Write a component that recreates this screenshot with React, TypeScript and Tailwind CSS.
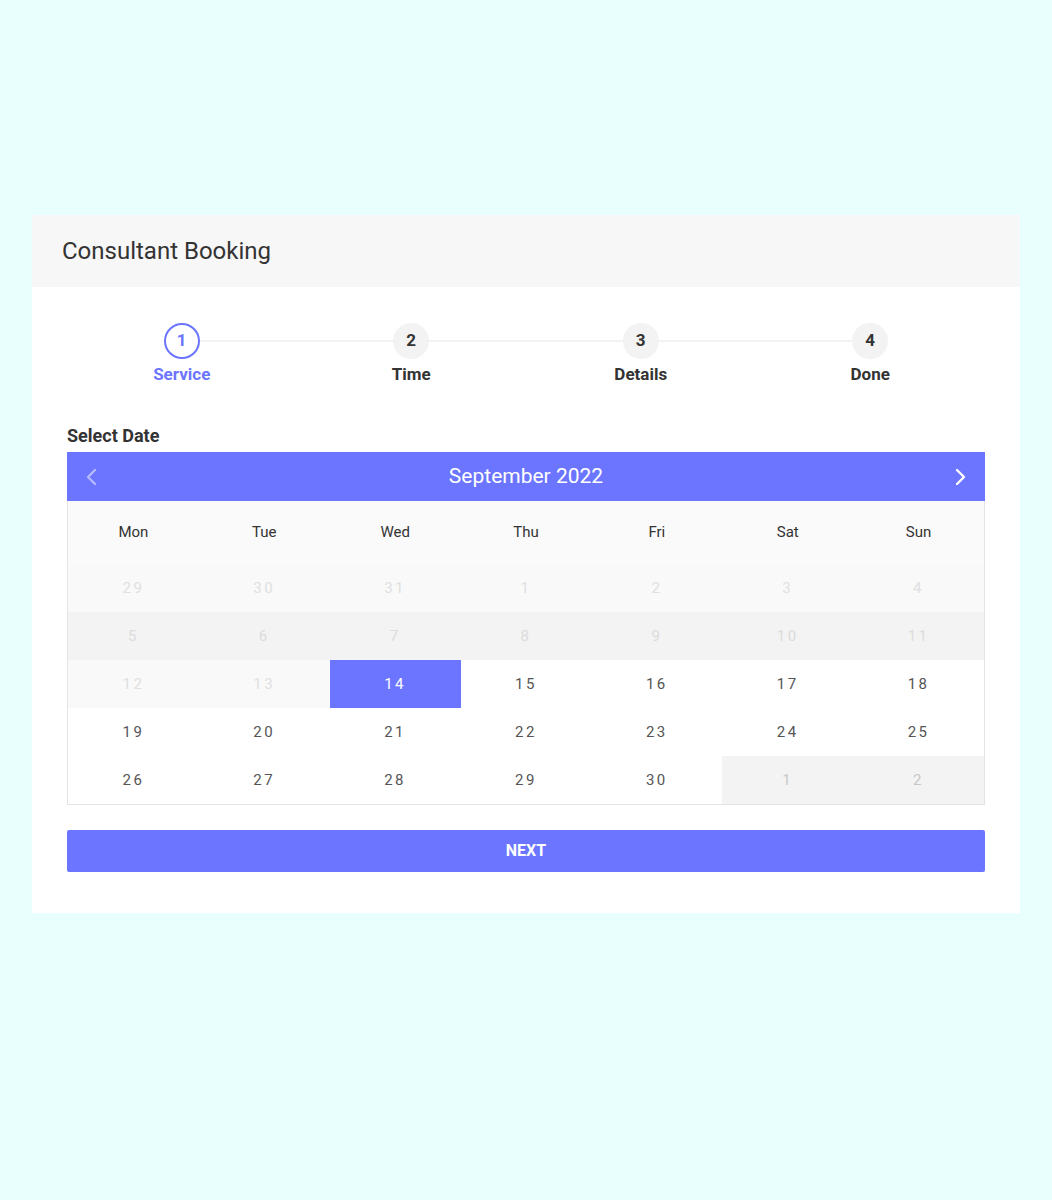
import React from "react";

type Day = { label: string; kind: "past" | "past2" | "normal" | "selected" | "next" };

const steps = [
  { n: 1, label: "Service", active: true },
  { n: 2, label: "Time", active: false },
  { n: 3, label: "Details", active: false },
  { n: 4, label: "Done", active: false },
];

const weekdays = ["Mon", "Tue", "Wed", "Thu", "Fri", "Sat", "Sun"];

const rows: { bg: string; days: Day[] }[] = [
  {
    bg: "bg-[#f9f9f9]",
    days: ["29", "30", "31", "1", "2", "3", "4"].map((d) => ({ label: d, kind: "past" })),
  },
  {
    bg: "bg-[#f3f3f3]",
    days: ["5", "6", "7", "8", "9", "10", "11"].map((d) => ({ label: d, kind: "past2" })),
  },
  {
    bg: "bg-white",
    days: [
      { label: "12", kind: "past" },
      { label: "13", kind: "past" },
      { label: "14", kind: "selected" },
      { label: "15", kind: "normal" },
      { label: "16", kind: "normal" },
      { label: "17", kind: "normal" },
      { label: "18", kind: "normal" },
    ],
  },
  {
    bg: "bg-white",
    days: ["19", "20", "21", "22", "23", "24", "25"].map((d) => ({ label: d, kind: "normal" })),
  },
  {
    bg: "bg-white",
    days: [
      { label: "26", kind: "normal" },
      { label: "27", kind: "normal" },
      { label: "28", kind: "normal" },
      { label: "29", kind: "normal" },
      { label: "30", kind: "normal" },
      { label: "1", kind: "next" },
      { label: "2", kind: "next" },
    ],
  },
];

function cellClass(kind: Day["kind"]) {
  switch (kind) {
    case "past":
      return "bg-[#f9f9f9] text-[#e0e0e0]";
    case "past2":
      return "bg-[#f3f3f3] text-[#dcdcdc]";
    case "selected":
      return "bg-[#6b75ff] text-white";
    case "next":
      return "bg-[#f3f3f3] text-[#c8c8c8]";
    default:
      return "text-[#555555]";
  }
}

export default function App() {
  return (
    <div
      className="min-h-[1200px] bg-[#e8fffd] pt-[215px] px-[32px]"
      style={{ fontFamily: "Roboto, 'Noto Sans', sans-serif" }}
    >
      <div className="bg-white">
        {/* Header */}
        <div className="h-[72px] bg-[#f7f7f7] flex items-center pl-[30px]">
          <h1 className="text-[24px] text-[#333333] font-normal">Consultant Booking</h1>
        </div>

        <div className="px-[35px] pt-[36px] pb-[41px]">
          {/* Stepper */}
          <div className="relative grid grid-cols-4">
            <div className="absolute left-[12.5%] right-[12.5%] top-[17px] h-[2px] bg-[#f2f2f2]" />
            {steps.map((s) => (
              <div key={s.n} className="relative flex flex-col items-center">
                <div
                  className={`w-[36px] h-[36px] rounded-full flex items-center justify-center text-[17px] font-bold ${
                    s.active
                      ? "border-[2.5px] border-[#6b75ff] bg-white text-[#6b75ff]"
                      : "bg-[#f3f3f3] text-[#333333]"
                  }`}
                >
                  {s.n}
                </div>
                <div
                  className={`mt-[5px] text-[17px] leading-[20px] font-bold ${
                    s.active ? "text-[#6b75ff]" : "text-[#333333]"
                  }`}
                >
                  {s.label}
                </div>
              </div>
            ))}
          </div>

          {/* Select date */}
          <div className="mt-[42px] text-[18px] leading-[20px] font-bold text-[#333333]">Select Date</div>

          <div className="mt-[6px]">
            <div className="h-[49px] bg-[#6b75ff] flex items-center justify-between px-[16px]">
              <button type="button" className="text-white/50">
                <svg width="16" height="20" viewBox="0 0 16 20" fill="none">
                  <path d="M12 3L5 10L12 17" stroke="currentColor" strokeWidth="2.4" strokeLinecap="round" strokeLinejoin="round" />
                </svg>
              </button>
              <div className="text-[21px] text-white">September 2022</div>
              <button type="button" className="text-white">
                <svg width="16" height="20" viewBox="0 0 16 20" fill="none">
                  <path d="M4 3L11 10L4 17" stroke="currentColor" strokeWidth="2.4" strokeLinecap="round" strokeLinejoin="round" />
                </svg>
              </button>
            </div>

            <div className="border-[1.5px] border-t-0 border-[#e3e3e3]">
              <div className="grid grid-cols-7 h-[63px] bg-[#fafafa]">
                {weekdays.map((w) => (
                  <div key={w} className="flex items-center justify-center text-[15px] text-[#333333]">
                    {w}
                  </div>
                ))}
              </div>
              {rows.map((r, i) => (
                <div key={i} className={`grid grid-cols-7 h-[48px] ${r.bg}`}>
                  {r.days.map((d, j) => (
                    <div
                      key={j}
                      className={`flex items-center justify-center text-[15px] tracking-[2.5px] ${cellClass(d.kind)}`}
                    >
                      {d.label}
                    </div>
                  ))}
                </div>
              ))}
            </div>
          </div>

          <button
            type="button"
            className="mt-[25px] w-full h-[42px] rounded-[2px] bg-[#6b75ff] text-white font-bold text-[16px]"
          >
            NEXT
          </button>
        </div>
      </div>
    </div>
  );
}
